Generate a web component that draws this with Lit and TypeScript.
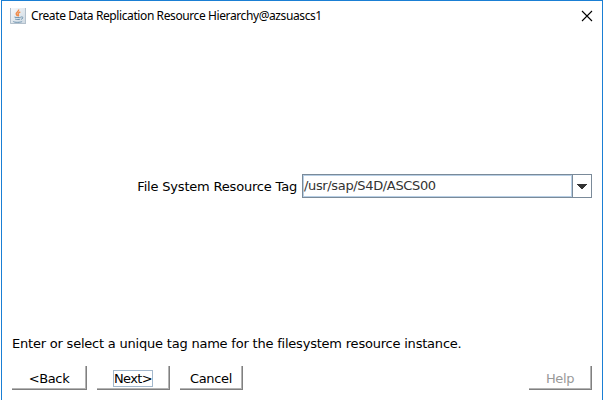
import { LitElement, html, css } from "lit";
import { customElement, property } from "lit/decorators.js";

@customElement("dialog-button")
class DialogButton extends LitElement {
  @property() label = "";
  @property({ type: Boolean }) focused = false;
  @property({ type: Boolean }) disabled = false;
  static styles = css`
    :host { display: block; height: 24px; }
    .button {
      box-sizing: border-box; width: 100%; height: 24px; margin: 0; padding: 1px 1px 0 0;
      display: flex; align-items: center; justify-content: center;
      font: inherit; letter-spacing: inherit; color: #000; background: #fff; border: 0;
      box-shadow: inset -1px -1px #808080, inset -2px -2px #b4b4b4;
    }
    .button:disabled { color: #999; }
    .text { box-sizing: border-box; height: 17px; line-height: 15px; border: 1px solid transparent; white-space: nowrap; }
    .focused { width: 40px; border-color: #a3b8cc; letter-spacing: -0.65px; }
  `;
  render() {
    return html`<button class="button" ?disabled=${this.disabled}>
      <span class="text ${this.focused ? "focused" : ""}">${this.label}</span>
    </button>`;
  }
}

@customElement("app-root")
class AppRoot extends LitElement {
  static styles = css`
    :host { display: block; width: 604px; height: 400px; background: #fff; }
    .window {
      box-sizing: border-box; width: 602px; height: 400px; margin-left: 1px; overflow: hidden;
      border: solid #1a7fd4; border-width: 1px 1px 0; background: #fff;
      display: flex; flex-direction: column;
      font: 13px "DejaVu Sans", sans-serif; color: #000;
    }
    .titlebar { height: 30px; display: flex; align-items: center; padding: 0 9px 0 8px; }
    .logo { display: block; margin-right: 5px; }
    .title { flex: 1; font: 12px/16px "Noto Sans", sans-serif; letter-spacing: -0.4px; white-space: nowrap; }
    .close { display: block; margin-top: -1px; }
    .body { flex: 1; display: flex; flex-direction: column; padding: 0 10px 0 10px; }
    .field { margin-top: 143px; height: 24px; display: flex; align-items: center; justify-content: flex-end; }
    .label { margin-right: 5px; padding-top: 2px; white-space: nowrap; letter-spacing: -0.19px; line-height: 22px; }
    .combo { box-sizing: border-box; width: 290px; height: 24px; border: 1px solid #7a8a99; display: flex; }
    .value {
      flex: 1; border: 1px solid #b8cfe5;
      line-height: 20px; white-space: nowrap; letter-spacing: -0.35px; color: #333;
    }
    .arrow { width: 18px; border-left: 1px solid #7a8a99; display: flex; align-items: center; justify-content: center; }
    .message { margin-top: 137px; height: 18px; line-height: 18px; white-space: nowrap; letter-spacing: -0.21px; }
    .actions { margin-top: 13px; display: flex; letter-spacing: -0.35px; }
    .back { width: 75px; margin-right: 10px; }
    .next { width: 73px; margin-right: 10px; }
    .cancel { width: 63px; }
    .help { width: 63px; margin-left: auto; }
  `;
  render() {
    return html`
      <div class="window">
        <div class="titlebar">
          <svg class="logo" width="16" height="16" viewBox="0 0 16 16">
            <defs><linearGradient id="tile" x1="0" y1="0" x2="1" y2="1">
              <stop offset="0" stop-color="#f7f9fb" /><stop offset="1" stop-color="#cdd8e1" />
            </linearGradient></defs>
            <path d="M0 0h16v16H0z" fill="url(#tile)" />
            <path d="M.5 0v15.5H16M15.5 0v16" fill="none" stroke="#b3c0cc" />
            <path d="M8.6 1.5C9.3 3.6 5.5 4.2 6.2 6.1c.2.7 1 1.2 1.2 2M10.3 4C8 4.8 7.5 5.7 8.4 6.8c.3.5.2.9-.2 1.4" fill="none" stroke="#f08a48" stroke-width="1.4" />
            <path d="M4.5 9.1c2 .7 5 .6 6.3.1M5.2 11.1c1.5.6 3.8.5 5 0M3.3 13.2c-.6 1.4 7.7 1.5 8.8.2M11.2 8.9c2.7-.2 1.8 2-.2 2.4" fill="none" stroke="#6b91ad" stroke-width="1" />
          </svg>
          <span class="title">Create Data Replication Resource Hierarchy@azsuascs1</span>
          <svg class="close" width="12" height="12" viewBox="0 0 12 12">
            <path d="M1 1l10 10M11 1L1 11" stroke="#000" stroke-width="1.1" />
          </svg>
        </div>
        <div class="body">
          <div class="field">
            <span class="label">File System Resource Tag</span>
            <div class="combo">
              <div class="value">/usr/sap/S4D/ASCS00</div>
              <div class="arrow">
                <svg width="10" height="5" viewBox="0 0 10 5" shape-rendering="crispEdges"><path d="M0 0h10v1H9v1H8v1H7v1H6v1H4V4H3V3H2V2H1V1H0z" fill="#333" /></svg>
              </div>
            </div>
          </div>
          <div class="message">Enter or select a unique tag name for the filesystem resource instance.</div>
          <div class="actions">
            <dialog-button class="back" label="&lt;Back"></dialog-button>
            <dialog-button class="next" label="Next&gt;" focused></dialog-button>
            <dialog-button class="cancel" label="Cancel"></dialog-button>
            <dialog-button class="help" label="Help" disabled></dialog-button>
          </div>
        </div>
      </div>`;
  }
}
